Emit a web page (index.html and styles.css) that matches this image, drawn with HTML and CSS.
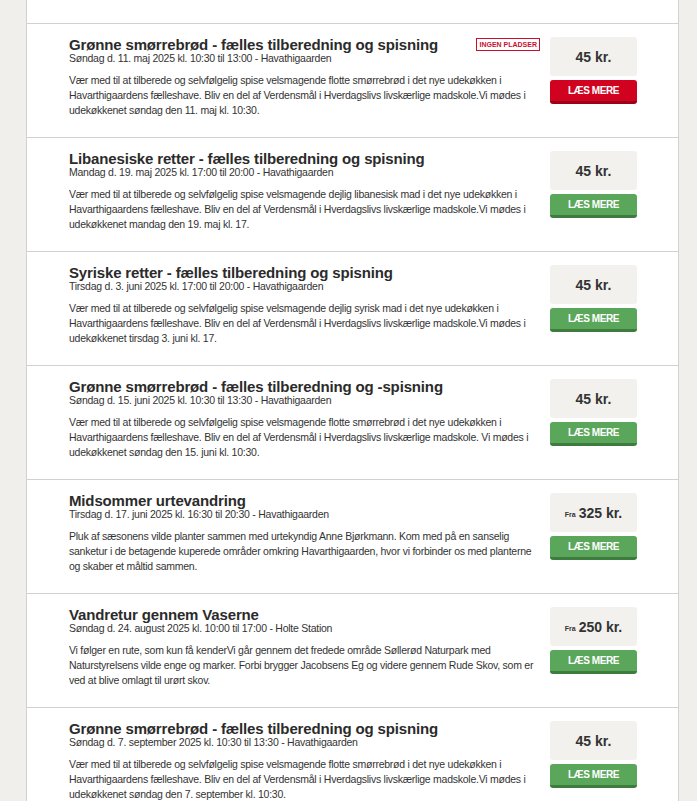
FILE: index.html
```html
<!DOCTYPE html>
<html lang="da">

<head>
    <meta charset="UTF-8">
    <meta name="viewport" content="width=device-width, initial-scale=1.0">
    <title>Arrangementer</title>
    <link rel="stylesheet" href="styles.css">
</head>

<body>
    <div class="event-list">
        <div class="event event-cut"></div>

        <div class="event">
            <div class="event-info">
                <div class="event-head">
                    <h2 class="event-title">Grønne smørrebrød - fælles tilberedning og spisning</h2>
                    <span class="badge">INGEN PLADSER</span>
                </div>
                <div class="event-date">Søndag d. 11. maj 2025 kl. 10:30 til 13:00 - Havathigaarden</div>
                <p class="event-text">Vær med til at tilberede og selvfølgelig spise velsmagende flotte smørrebrød i det nye udekøkken i Havarthigaardens fælleshave. Bliv en del af Verdensmål i Hverdagslivs livskærlige madskole.Vi mødes i udekøkkenet søndag den 11. maj kl. 10:30.</p>
            </div>
            <div class="event-side">
                <div class="price">45 kr.</div>
                <a class="more-button full" href="#">LÆS MERE</a>
            </div>
        </div>

        <div class="event">
            <div class="event-info">
                <div class="event-head">
                    <h2 class="event-title">Libanesiske retter - fælles tilberedning og spisning</h2>
                </div>
                <div class="event-date">Mandag d. 19. maj 2025 kl. 17:00 til 20:00 - Havathigaarden</div>
                <p class="event-text">Vær med til at tilberede og selvfølgelig spise velsmagende dejlig libanesisk mad i det nye udekøkken i Havarthigaardens fælleshave. Bliv en del af Verdensmål i Hverdagslivs livskærlige madskole.Vi mødes i udekøkkenet mandag den 19. maj kl. 17.</p>
            </div>
            <div class="event-side">
                <div class="price">45 kr.</div>
                <a class="more-button" href="#">LÆS MERE</a>
            </div>
        </div>

        <div class="event">
            <div class="event-info">
                <div class="event-head">
                    <h2 class="event-title">Syriske retter - fælles tilberedning og spisning</h2>
                </div>
                <div class="event-date">Tirsdag d. 3. juni 2025 kl. 17:00 til 20:00 - Havathigaarden</div>
                <p class="event-text">Vær med til at tilberede og selvfølgelig spise velsmagende dejlig syrisk mad i det nye udekøkken i Havarthigaardens fælleshave. Bliv en del af Verdensmål i Hverdagslivs livskærlige madskole.Vi mødes i udekøkkenet tirsdag 3. juni kl. 17.</p>
            </div>
            <div class="event-side">
                <div class="price">45 kr.</div>
                <a class="more-button" href="#">LÆS MERE</a>
            </div>
        </div>

        <div class="event">
            <div class="event-info">
                <div class="event-head">
                    <h2 class="event-title">Grønne smørrebrød - fælles tilberedning og -spisning</h2>
                </div>
                <div class="event-date">Søndag d. 15. juni 2025 kl. 10:30 til 13:30 - Havathigaarden</div>
                <p class="event-text">Vær med til at tilberede og selvfølgelig spise velsmagende flotte smørrebrød i det nye udekøkken i Havarthigaardens fælleshave. Bliv en del af Verdensmål i Hverdagslivs livskærlige madskole. Vi mødes i udekøkkenet søndag den 15. juni kl. 10:30.</p>
            </div>
            <div class="event-side">
                <div class="price">45 kr.</div>
                <a class="more-button" href="#">LÆS MERE</a>
            </div>
        </div>

        <div class="event">
            <div class="event-info">
                <div class="event-head">
                    <h2 class="event-title">Midsommer urtevandring</h2>
                </div>
                <div class="event-date">Tirsdag d. 17. juni 2025 kl. 16:30 til 20:30 - Havathigaarden</div>
                <p class="event-text">Pluk af sæsonens vilde planter sammen med urtekyndig Anne Bjørkmann. Kom med på en sanselig sanketur i de betagende kuperede områder omkring Havarthigaarden, hvor vi forbinder os med planterne og skaber et måltid sammen.</p>
            </div>
            <div class="event-side">
                <div class="price"><small>Fra</small> 325 kr.</div>
                <a class="more-button" href="#">LÆS MERE</a>
            </div>
        </div>

        <div class="event">
            <div class="event-info">
                <div class="event-head">
                    <h2 class="event-title">Vandretur gennem Vaserne</h2>
                </div>
                <div class="event-date">Søndag d. 24. august 2025 kl. 10:00 til 17:00 - Holte Station</div>
                <p class="event-text">Vi følger en rute, som kun få kenderVi går gennem det fredede område Søllerød Naturpark med Naturstyrelsens vilde enge og marker. Forbi brygger Jacobsens Eg og videre gennem Rude Skov, som er ved at blive omlagt til urørt skov.</p>
            </div>
            <div class="event-side">
                <div class="price"><small>Fra</small> 250 kr.</div>
                <a class="more-button" href="#">LÆS MERE</a>
            </div>
        </div>

        <div class="event">
            <div class="event-info">
                <div class="event-head">
                    <h2 class="event-title">Grønne smørrebrød - fælles tilberedning og spisning</h2>
                </div>
                <div class="event-date">Søndag d. 7. september 2025 kl. 10:30 til 13:30 - Havathigaarden</div>
                <p class="event-text">Vær med til at tilberede og selvfølgelig spise velsmagende flotte smørrebrød i det nye udekøkken i Havarthigaardens fælleshave. Bliv en del af Verdensmål i Hverdagslivs livskærlige madskole.Vi mødes i udekøkkenet søndag den 7. september kl. 10:30.</p>
            </div>
            <div class="event-side">
                <div class="price">45 kr.</div>
                <a class="more-button" href="#">LÆS MERE</a>
            </div>
        </div>
    </div>
</body>

</html>
```

FILE: styles.css
```css
html,
body {
    margin: 0;
    background-color: #f0efeb;
    font-family: "Liberation Sans", Arial, sans-serif;
    color: #333333;
}

.event-list {
    box-sizing: border-box;
    width: 653px;
    margin-left: 26px;
    background: #ffffff;
    border-left: 1px solid #d2d1cd;
    border-right: 1px solid #d2d1cd;
}

.event {
    box-sizing: border-box;
    height: 114px;
    padding: 13px 41px 0 42px;
    border-bottom: 1px solid #d2d1cd;
    display: flex;
    gap: 10px;
}

.event-cut {
    height: 24px;
    padding: 0;
}

.event-info {
    flex: 1;
    min-width: 0;
}

.event-head {
    display: flex;
    justify-content: space-between;
    align-items: flex-start;
}

.event-title {
    margin: 0;
    font-size: 15px;
    line-height: 15px;
    letter-spacing: -0.15px;
    font-weight: bold;
    color: #2b2b2b;
}

.badge {
    margin-top: 1px;
    padding: 1px 2px;
    border: 1px solid #c8102e;
    color: #c8102e;
    font-size: 7px;
    line-height: 9px;
    font-weight: bold;
    white-space: nowrap;
}

.event-date {
    font-size: 10.5px;
    line-height: 12px;
    letter-spacing: -0.25px;
}

.event-text {
    margin: 9px 0 0;
    font-size: 10.5px;
    line-height: 15px;
    letter-spacing: -0.25px;
}

.event-side {
    width: 87px;
    flex: none;
    display: flex;
    flex-direction: column;
    gap: 4px;
}

.price {
    height: 39px;
    border-radius: 3px;
    background: #f2f1ee;
    display: flex;
    justify-content: center;
    align-items: center;
    font-size: 14px;
    font-weight: bold;
    color: #333333;
}

.price small {
    font-size: 7px;
    margin-right: 3px;
    margin-top: 3px;
}

.more-button {
    box-sizing: border-box;
    height: 24px;
    border-radius: 3px;
    background: #5aa65b;
    border-bottom: 3px solid #3d7c3e;
    color: #ffffff;
    text-decoration: none;
    font-size: 10px;
    font-weight: bold;
    letter-spacing: -0.4px;
    display: flex;
    justify-content: center;
    align-items: center;
}

.more-button.full {
    background: #d0021f;
    border-bottom-color: #9c0018;
}
```
